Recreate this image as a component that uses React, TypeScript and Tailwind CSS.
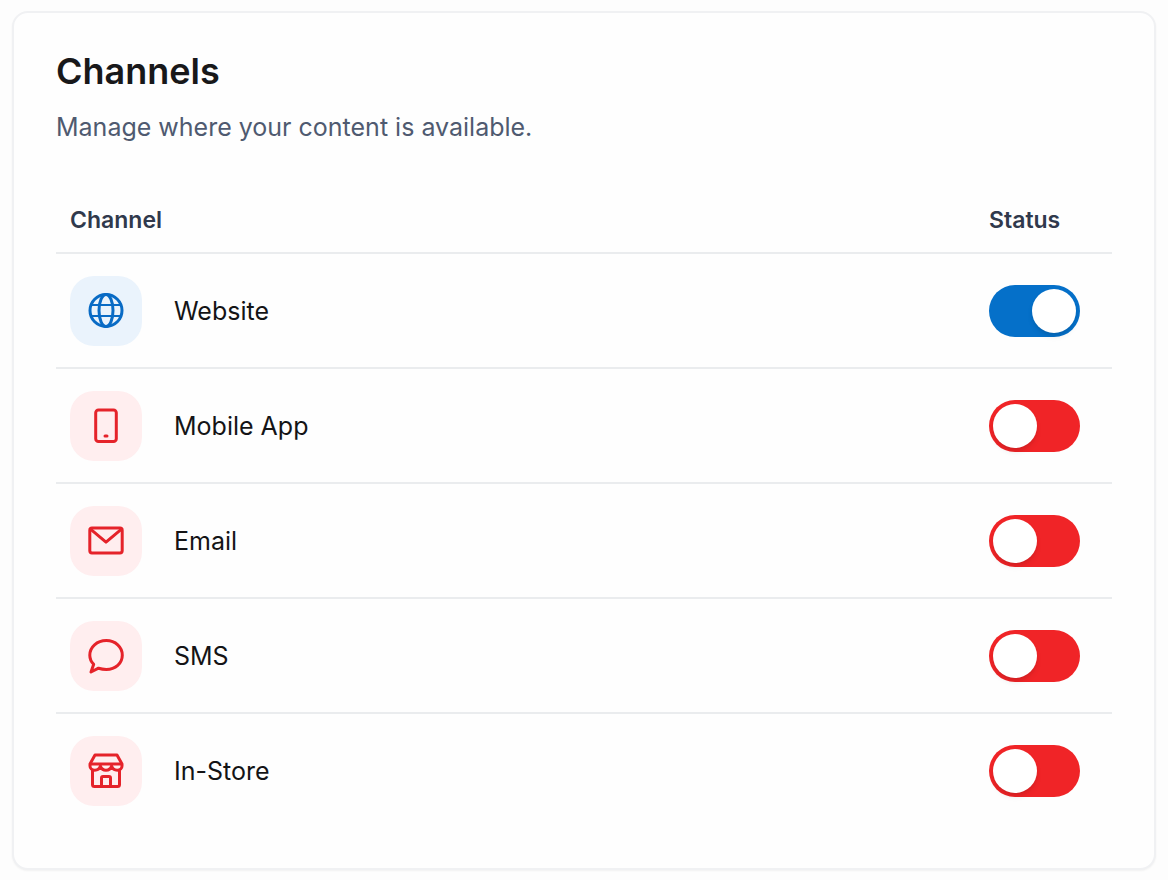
import React, { useState } from 'react';

interface Channel {
  id: string;
  name: string;
  enabled: boolean;
  icon: React.ReactNode;
}

const initialChannels: Channel[] = [
  {
    id: 'website',
    name: 'Website',
    enabled: true,
    icon: (
      <>
        <circle cx="18" cy="17.5" r="16" />
        <ellipse cx="18" cy="17.5" rx="7" ry="16" />
        <path strokeWidth="2.2" d="M4 12h28M4 23h28" />
      </>
    ),
  },
  {
    id: 'mobile-app',
    name: 'Mobile App',
    enabled: false,
    icon: (
      <>
        <rect x="7.7" y="2" width="20.6" height="31.6" rx="2.8" />
        <path d="M17 28h2" />
      </>
    ),
  },
  {
    id: 'email',
    name: 'Email',
    enabled: false,
    icon: (
      <>
        <rect x="1.8" y="5" width="32.4" height="25" rx="2.2" />
        <path d="M2.8 6.4 18 19.200 33.200 6.400" />
      </>
    ),
  },
  {
    id: 'sms',
    name: 'SMS',
    enabled: false,
    icon: (
      <path d="M3 34 10.500 30.200C13 31 15.500 31.400 18.300 31.400 27.500 31.400 34.300 25.300 34.300 17.200 34.300 9 27.500 2.600 18.300 2.600 9 2.600 1.800 9 1.800 17.200 1.800 21 3.200 23.800 5.700 26.300Z" />
    ),
  },
  {
    id: 'in-store',
    name: 'In-Store',
    enabled: false,
    icon: (
      <>
        <path d="M7 2h22l5 9v2c0 2.400-1.800 4.200-4.800 4.200-2.600 0-4.700-1.700-5.600-4.200-.8 2.500-2.900 4.200-5.600 4.200s-4.800-1.700-5.600-4.200c-.9 2.500-3 4.200-5.600 4.200C3.800 17.200 2 15.400 2 13v-2Z" />
        <path d="M3 11h30M4.500 17.500v14a2 2 0 0 0 2 2h23a2 2 0 0 0 2-2v-14" />
        <path d="M13.500 33.500v-8.500a1.500 1.500 0 0 1 1.500-1.500h6a1.500 1.500 0 0 1 1.500 1.500v8.500" />
      </>
    ),
  },
];

const App: React.FC = () => {
  const [channels, setChannels] = useState(initialChannels);

  const toggle = (id: string) => {
    setChannels((list) =>
      list.map((c) => (c.id === id ? { ...c, enabled: !c.enabled } : c)),
    );
  };

  return (
    <main className="min-h-screen bg-[#fdfdfd] px-3 py-[11px] font-['Inter',sans-serif]">
      <section className="rounded-2xl border-2 border-[#f0f1f3] bg-[#fefefe] px-[42px] pt-[34px] pb-10 shadow-xs">
        <h1 className="text-4xl leading-12 font-semibold text-[#18181a]">
          Channels
        </h1>
        <p className="mt-3.5 text-[25px] leading-9 text-[#4f5a70]">
          Manage where your content is available.
        </p>

        <table className="mt-11 w-full border-collapse text-left">
          <thead>
            <tr className="h-16 border-b-2 border-[#eaecee] text-[23px] text-[#30394c]">
              <th scope="col" className="pl-3.5 font-semibold">
                Channel
              </th>
              <th scope="col" className="w-[123px] font-semibold">
                Status
              </th>
            </tr>
          </thead>
          <tbody>
            {channels.map((channel) => (
              <tr
                key={channel.id}
                className="h-[115px] border-b-2 border-[#eaecee] last:border-b-0"
              >
                <td className="pl-3.5">
                  <div className="flex items-center gap-8">
                    <span
                      className={`flex h-[70px] w-18 items-center justify-center rounded-3xl ${
                        channel.enabled
                          ? 'bg-[#eaf3fc] text-[#096bc5]'
                          : 'bg-[#ffeeef] text-[#e5232a]'
                      }`}
                    >
                      <svg
                        className="size-9"
                        viewBox="0 0 36 36"
                        fill="none"
                        stroke="currentColor"
                        strokeWidth="3"
                        strokeLinecap="round"
                        strokeLinejoin="round"
                        aria-hidden="true"
                      >
                        {channel.icon}
                      </svg>
                    </span>
                    <label
                      htmlFor={channel.id}
                      className="text-[25px] leading-9 text-[#141416]"
                    >
                      {channel.name}
                    </label>
                  </div>
                </td>
                <td>
                  <input
                    id={channel.id}
                    type="checkbox"
                    role="switch"
                    checked={channel.enabled}
                    onChange={() => toggle(channel.id)}
                    className="flex h-13 w-[91px] cursor-pointer appearance-none items-center rounded-full bg-[#f02427] px-1 before:size-11 before:rounded-full before:bg-white before:shadow-md checked:justify-end checked:bg-[#0570c9]"
                  />
                </td>
              </tr>
            ))}
          </tbody>
        </table>
      </section>
    </main>
  );
};

export default App;
